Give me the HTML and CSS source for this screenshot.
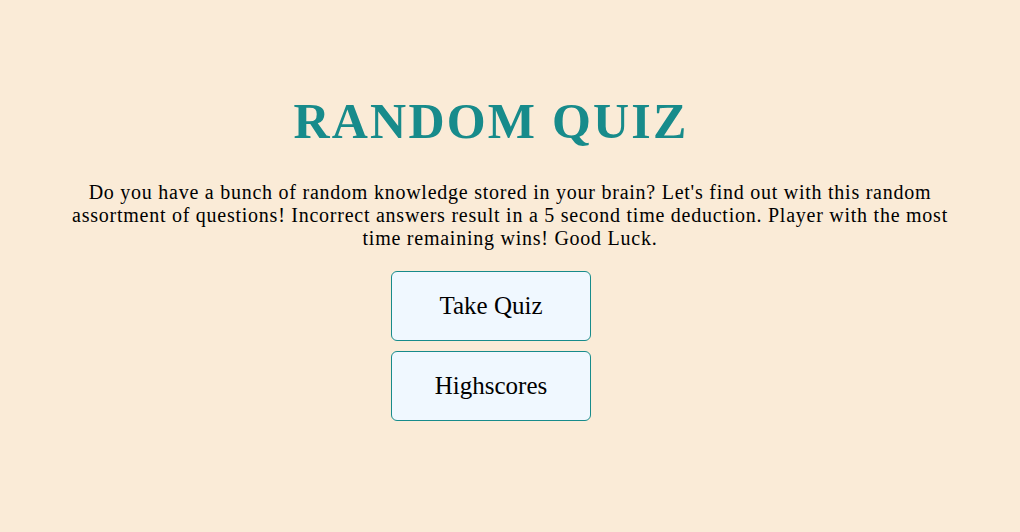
FILE: index.html
```html
<!DOCTYPE html>
<html>
<head>
<meta charset="utf-8">
<link rel="stylesheet" href="styles.css">
</head>
<body>
<main class="start">
  <h1 class="title">RANDOM QUIZ</h1>
  <p class="intro">Do you have a bunch of random knowledge stored in your brain? Let's find out with this random assortment of questions! Incorrect answers result in a 5 second time deduction. Player with the most time remaining wins! Good Luck.</p>
  <div class="actions">
    <button class="btn">Take Quiz</button>
    <button class="btn">Highscores</button>
  </div>
</main>
</body>
</html>
```
FILE: styles.css
```css
html, body {
  margin: 0;
  padding: 0;
  background: #faebd7;
  font-family: "Liberation Serif", "DejaVu Serif", serif;
  color: #000;
}
.start {
  display: flex;
  flex-direction: column;
  align-items: center;
  padding-top: 90px;
}
.title {
  margin: 0 38px 0 0;
  font-size: 50px;
  letter-spacing: 2.2px;
  line-height: 62px;
  font-weight: bold;
  color: #178b8b;
}
.intro {
  margin: 29px 0 0;
  width: 880px;
  text-align: center;
  font-size: 20px;
  letter-spacing: 0.75px;
  line-height: 23px;
}
.actions {
  margin: 21px 38px 0 0;
  display: flex;
  flex-direction: column;
  gap: 10px;
}
.btn {
  width: 200px;
  height: 70px;
  background: #f0f8ff;
  border: 1px solid #178b8b;
  border-radius: 6px;
  font-family: inherit;
  font-size: 25px;
  color: #000;
  padding: 0;
}
```
